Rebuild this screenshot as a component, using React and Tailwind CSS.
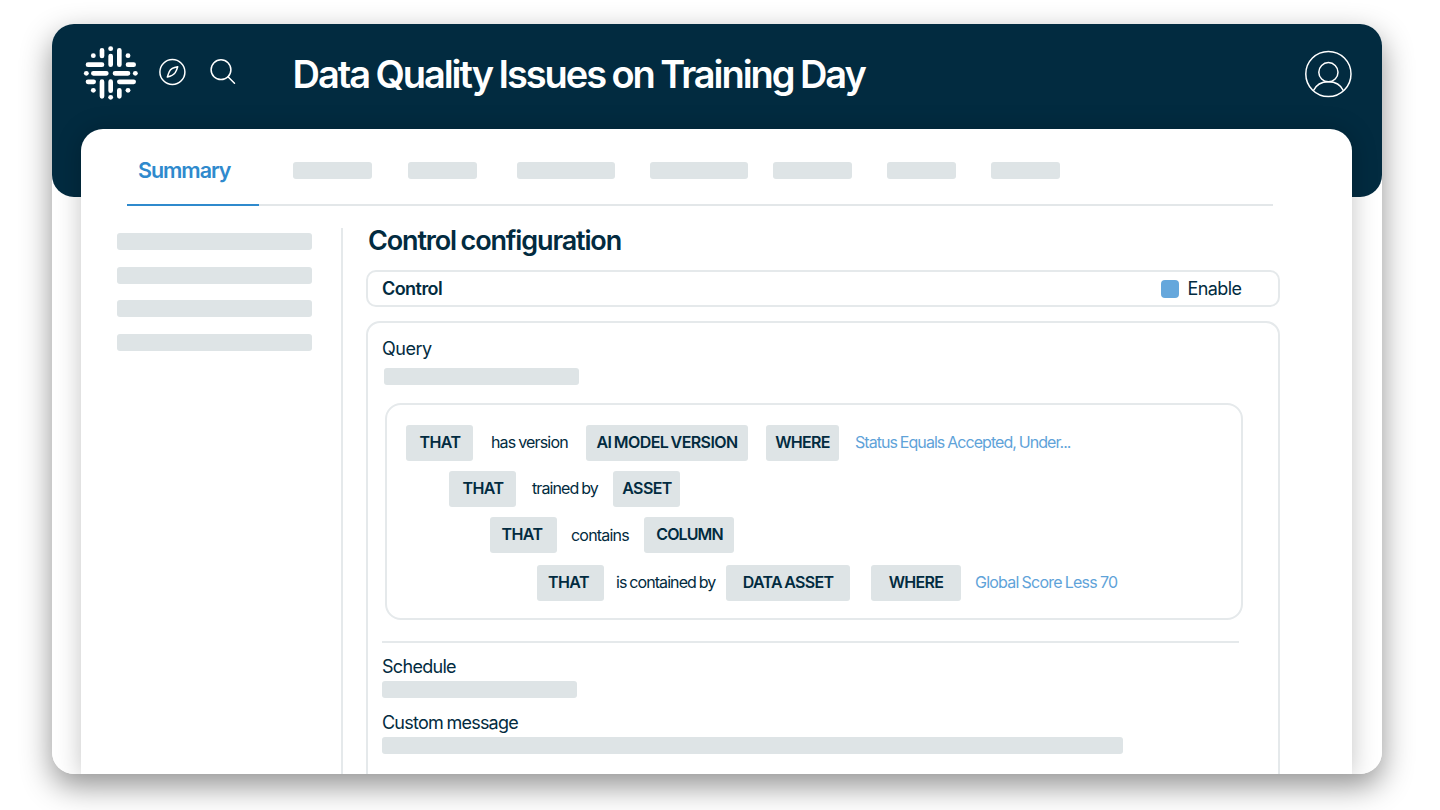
import React from "react";

const tabs = [
  "w-[79px] ml-0",
  "w-[69px] ml-[36px]",
  "w-[98px] ml-[40px]",
  "w-[98px] ml-[35px]",
  "w-[79px] ml-[25px]",
  "w-[69px] ml-[35px]",
  "w-[69px] ml-[35px]",
];

function Logo() {
  const dots = [
    [121, 55],
    [121, 201],
    [48, 129],
    [195, 129],
    [69, 76],
    [173, 76],
    [69, 180],
    [173, 180],
  ];
  return (
    <svg className="w-14 h-14 shrink-0" viewBox="38 47 168 168">
      <path
        d="M95 60V77M121 77V103M147 60V103M95 154V198M121 154V181M147 180V198M53 103H95M173 103H190M69 129H108M134 129H173M53 154.500H70M147 154.500H190"
        stroke="#fff"
        strokeWidth="14"
        strokeLinecap="round"
      />
      {dots.map(([x, y]) => (
        <circle key={`${x}-${y}`} cx={x} cy={y} r="7.3" fill="#fff" />
      ))}
    </svg>
  );
}

function CompassIcon() {
  return (
    <svg className="w-7 h-7 shrink-0" viewBox="0 0 28 28" fill="none" stroke="#fff" strokeWidth="1.5">
      <circle cx="14.4" cy="14" r="12.5" />
      <path
        d="M19.700 8.700C15.900 9.300 12.400 11.300 11.400 13.500C10.600 15.200 9.900 17 9.300 19.100C12.900 18.300 15.900 16.700 17.200 14.700C18.400 12.700 19.100 10.900 19.700 8.700Z"
        strokeLinejoin="round"
      />
    </svg>
  );
}

function SearchIcon() {
  return (
    <svg className="w-7 h-7 shrink-0" viewBox="0 0 28 28" fill="none" stroke="#fff" strokeWidth="1.5">
      <circle cx="12" cy="11.7" r="9.9" />
      <path d="M19 18.700L25.500 25.200" strokeLinecap="round" />
    </svg>
  );
}

function UserIcon() {
  return (
    <svg className="w-12 h-12 shrink-0" viewBox="0 0 48 48" fill="none" stroke="#fff" strokeWidth="1.5">
      <circle cx="24.4" cy="24" r="22.6" />
      <circle cx="24.4" cy="22.2" r="9.6" />
      <path d="M9.300 40.700C11.900 35.200 17.600 31.700 24.400 31.700C31.200 31.700 36.900 35.200 39.500 40.700" />
    </svg>
  );
}

function Bar({ className }) {
  return <div className={`h-[17px] rounded-[3px] bg-[#dee4e6] shrink-0 ${className}`} />;
}

function Chip({ className, children }) {
  return (
    <span
      className={`h-[36px] shrink-0 rounded-[3px] bg-[#dee4e6] text-center text-[16px] leading-[34px] font-semibold whitespace-nowrap [word-spacing:-1px] ${className}`}
    >
      {children}
    </span>
  );
}

function Rel({ className, children }) {
  return (
    <span className={`shrink-0 text-[16px] leading-[34px] whitespace-nowrap [word-spacing:-0.7px] ${className}`}>
      {children}
    </span>
  );
}

function QueryBuilder() {
  return (
    <div className="ml-[17px] mt-[18px] w-[858px] h-[217px] rounded-2xl border-2 border-[#e5e9eb] pt-[20px]">
      <div className="flex pl-[19px]">
        <Chip className="w-[67px] pl-px tracking-[-0.6px]">THAT</Chip>
        <Rel className="ml-[18px] w-[77px] tracking-[-0.85px]">has version</Rel>
        <Chip className="ml-[18px] w-[162px] tracking-[-0.6px]">AI MODEL VERSION</Chip>
        <Chip className="ml-[18px] w-[73px] tracking-[-0.7px]">WHERE</Chip>
        <Rel className="ml-[16px] text-[#5fa3d9] tracking-[-0.95px]">Status Equals Accepted, Under...</Rel>
      </div>
      <div className="mt-[10px] flex pl-[62px]">
        <Chip className="w-[67px] pl-px tracking-[-0.6px]">THAT</Chip>
        <Rel className="ml-[16px] w-[66px] tracking-[-0.92px]">trained by</Rel>
        <Chip className="ml-[15px] w-[67px] pl-px tracking-[-0.6px]">ASSET</Chip>
      </div>
      <div className="mt-[10px] flex pl-[103px]">
        <Chip className="w-[67px] pr-[3px] tracking-[-0.6px]">THAT</Chip>
        <Rel className="ml-[14px] w-[58px] pt-px tracking-[-0.8px]">contains</Rel>
        <Chip className="ml-[15px] w-[90px] pl-px tracking-[-0.9px]">COLUMN</Chip>
      </div>
      <div className="mt-[12px] flex pl-[150px]">
        <Chip className="w-[67px] pr-1 tracking-[-0.6px]">THAT</Chip>
        <Rel className="ml-[12px] w-[100px] tracking-[-0.93px]">is contained by</Rel>
        <Chip className="ml-[10px] w-[124px] tracking-[-0.7px]">DATA ASSET</Chip>
        <Chip className="ml-[21px] w-[90px] tracking-[-0.7px]">WHERE</Chip>
        <Rel className="ml-[14px] text-[#5fa3d9] tracking-[-0.78px]">Global Score Less 70</Rel>
      </div>
    </div>
  );
}

function Sidebar() {
  return (
    <div className="mt-[22px] w-[262px] shrink-0 border-r-2 border-[#e5e9eb] pl-[36px] pt-[5px]">
      <div className="flex flex-col gap-[16.500px]">
        <Bar className="w-[195px]" />
        <Bar className="w-[195px]" />
        <Bar className="w-[195px]" />
        <Bar className="w-[195px]" />
      </div>
    </div>
  );
}

function Panel() {
  return (
    <div className="mx-[29.500px] flex h-[645px] flex-col overflow-hidden rounded-t-[22px] bg-white shadow-[0_2px_26px_rgba(0,0,0,0.24)]">
      <div className="ml-[45.500px] flex h-[77px] w-[1146px] shrink-0 items-stretch border-b-2 border-[#e3e7e9]">
        <div className="-mb-[2px] w-[132px] border-b-2 border-[#2f8acd] pl-[11.500px] pt-[26px] text-[21.500px] leading-[30px] font-semibold tracking-[-1.05px] text-[#2f8acd]">
          Summary
        </div>
        <div className="ml-[34px] flex pt-[33px]">
          {tabs.map((cls, i) => (
            <Bar key={i} className={cls} />
          ))}
        </div>
      </div>
      <div className="flex grow">
        <Sidebar />
        <div className="ml-[23px] w-[914px]">
          <h2 className="mt-[17px] pl-[2px] text-[27px] leading-9 font-semibold tracking-[-1.15px] [word-spacing:-1px]">
            Control configuration
          </h2>
          <div className="mt-[11px] flex h-[37px] items-center rounded-[10px] border-2 border-[#e5e9eb] pl-[14px] pr-[35.500px]">
            <span className="text-[18px] font-semibold tracking-[-0.55px]">Control</span>
            <span className="mt-px ml-auto h-[18px] w-[18px] rounded-[4px] bg-[#65a7dc]" />
            <span className="ml-[8.500px] w-[55px] text-[18px] tracking-[-0.6px]">Enable</span>
          </div>
          <div className="mt-[14px] h-[500px] rounded-t-[14px] border-2 border-[#e5e9eb] text-[18px] leading-[24px] [word-spacing:-0.7px]">
            <div className="mt-[14px] pl-[14px] tracking-[-0.5px]">Query</div>
            <Bar className="mt-[7px] ml-[16px] w-[195px]" />
            <QueryBuilder />
            <div className="mt-[21px] ml-[14px] w-[857px] border-b-2 border-[#e5e9eb]" />
            <div className="mt-[12px] pl-[14px] tracking-[-0.7px]">Schedule</div>
            <Bar className="mt-[2px] ml-[14px] w-[195px]" />
            <div className="mt-[13px] pl-[14px] tracking-[-0.78px]">Custom message</div>
            <Bar className="mt-[2px] ml-[14px] w-[741px]" />
          </div>
        </div>
      </div>
    </div>
  );
}

export default function App() {
  return (
    <div className="h-[810px] w-[1440px] overflow-hidden bg-white pt-6 pl-[51.500px] font-['Inter','Liberation_Sans',sans-serif] text-[#022b40]">
      <div className="h-[750px] w-[1330px] rounded-[22px] shadow-[0_12px_31px_rgba(0,0,0,0.43)]">
        <div className="h-[750px] overflow-hidden rounded-[22px] bg-white">
          <div className="h-[173px] rounded-b-[22px] bg-[#022b40]">
            <div className="flex h-[105px] pl-[31.500px] pr-[29.500px] text-white">
              <div className="pt-[22px]">
                <Logo />
              </div>
              <div className="ml-[19px] pt-[34px]">
                <CompassIcon />
              </div>
              <div className="ml-[22.500px] pt-[34px]">
                <SearchIcon />
              </div>
              <h1 className="ml-[56px] pt-[26px] text-[38px] leading-[48px] font-semibold tracking-[-2.06px] [word-spacing:-1px]">
                Data Quality Issues on Training Day
              </h1>
              <div className="ml-auto pt-[26px]">
                <UserIcon />
              </div>
            </div>
            <Panel />
          </div>
        </div>
      </div>
    </div>
  );
}
